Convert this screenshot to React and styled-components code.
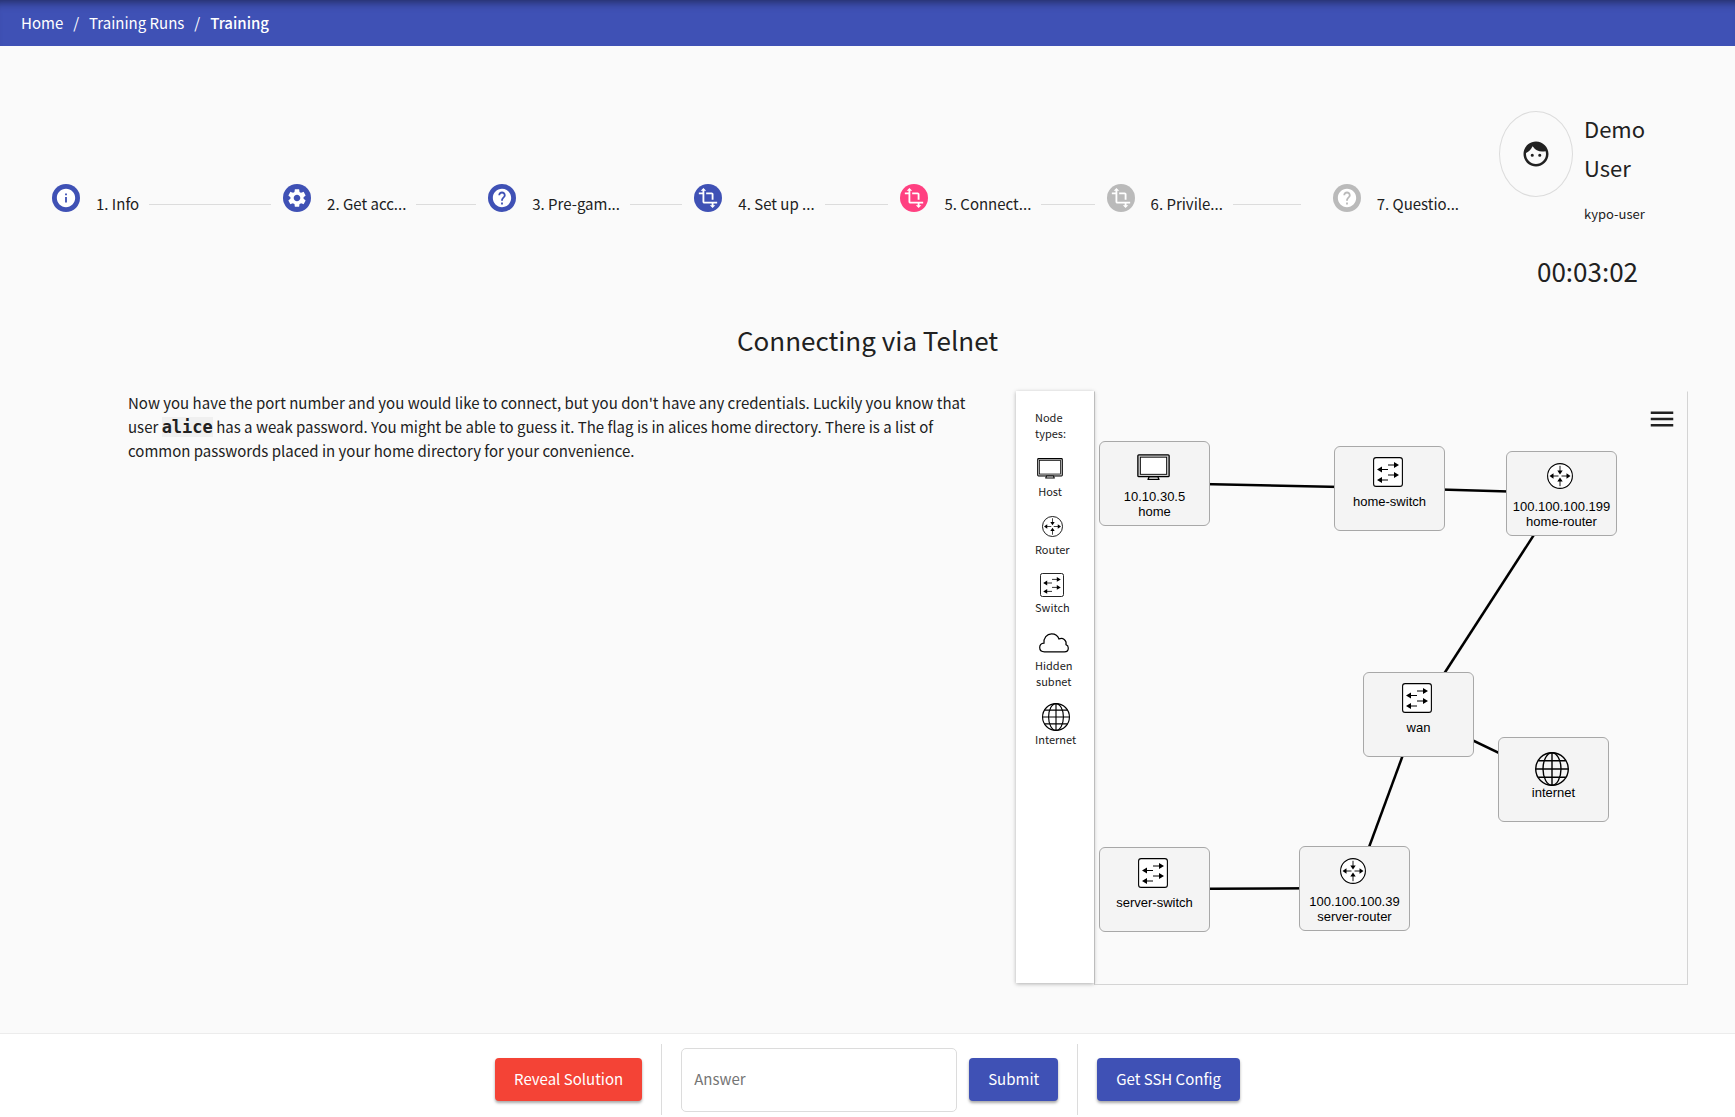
import React from "react";
import styled, { createGlobalStyle } from "styled-components";
import { MdFace, MdHelp, MdInfo, MdMenu, MdSettings, MdTransform } from "react-icons/md";

const GlobalStyle = createGlobalStyle`
  *, *::before, *::after { box-sizing: border-box; }
  body {
    margin: 0;
    background: #fafafa;
    color: #212121;
    font-family: "Noto Sans CJK JP", "Noto Sans", sans-serif;
    font-size: 15px;
    line-height: 24px;
  }
`;

const Page = styled.div`
  min-height: 100vh;
  display: flex;
  flex-direction: column;
`;

const Breadcrumbs = styled.nav`
  background: #3f51b5;
  box-shadow: inset 0 10px 10px -8px rgba(0, 0, 0, 0.5);
  padding: 11px 21px;
  color: #fff;

  ol {
    display: flex;
    margin: 0;
    padding: 0;
    list-style: none;
  }

  li + li::before {
    content: "/";
    margin: 0 10px;
  }
`;

const Crumb = styled.a`
  color: inherit;
  text-decoration: none;
  font-weight: ${(p) => (p.$current ? 500 : 400)};
`;

const Main = styled.main`
  flex: 1;
  display: flex;
  flex-direction: column;
`;

const TopBar = styled.section`
  display: grid;
  grid-template-columns: 1fr 148px;
  column-gap: 40px;
  padding: 65px 88px 0 52px;
`;

const Stepper = styled.ol`
  display: grid;
  grid-template-columns: 231fr 205fr repeat(3, 206fr) 226fr auto;
  align-items: center;
  align-self: start;
  margin: 73px 0 0;
  padding: 0;
  list-style: none;
`;

const Step = styled.li`
  display: flex;
  align-items: center;
  white-space: nowrap;
`;

const stepColors = { done: "#3f51b5", active: "#ff4081", locked: "#bababa" };

const StepIcon = styled.span`
  flex: none;
  display: grid;
  place-items: center;
  width: 28px;
  height: 28px;
  margin: 0 16px 12px 0;
  border-radius: 50%;
  background: ${(p) => stepColors[p.$state]};
  color: #fff;
`;

const StepLine = styled.span`
  flex: 1;
  height: 1px;
  margin: 0 ${(p) => (p.$wide ? 32 : 12)}px 0 10px;
  background: #dcdcdc;
`;

const UserPanel = styled.aside`
  display: grid;
  grid-template-columns: 74px 64px;
  column-gap: 11px;
`;

const Avatar = styled.div`
  display: grid;
  place-items: center;
  height: 86px;
  border: 1px solid #dcdcdc;
  border-radius: 50%;
`;

const UserName = styled.p`
  margin: -2px 0 0;
  font-size: 22px;
  line-height: 39px;
`;

const Login = styled.p`
  margin: 15px 0 0;
  font-size: 13px;
  white-space: nowrap;
`;

const Timer = styled.time`
  grid-column: 1 / -1;
  justify-self: end;
  margin-top: 29px;
  padding-right: 10px;
  font-size: 26px;
  line-height: 32px;
`;

const Title = styled.h1`
  margin: 37px 0 0;
  text-align: center;
  font-size: 26px;
  font-weight: 400;
  line-height: 32px;
`;

const Content = styled.section`
  display: grid;
  grid-template-columns: 842fr 672fr;
  column-gap: 46px;
  padding: 0 47px 48px 128px;
  margin-top: 35px;
`;

const Assignment = styled.p`
  margin: 0;

  code {
    background: #f0f0f0;
    font: bold 17px/16px "DejaVu Sans Mono", monospace;
  }
`;

const Topology = styled.div`
  display: flex;
  min-height: 594px;
`;

const Legend = styled.div`
  flex: none;
  display: flex;
  flex-direction: column;
  align-items: flex-start;
  gap: 13px;
  width: 78px;
  margin-bottom: 2px;
  padding: 18px 19px;
  background: #fff;
  box-shadow: 0 1px 4px rgba(0, 0, 0, 0.3);
  font-size: 11px;
  line-height: 16px;
`;

const LegendItem = styled.div`
  min-width: 30px;
  text-align: center;
`;

const LegendIcon = styled.div`
  display: grid;
  place-items: center;
  height: 29px;
`;

const Canvas = styled.div`
  position: relative;
  flex: 1;
  border: 1px solid #d4d4d4;
  border-left-color: #bdbdbd;
  border-top-color: transparent;
  font-family: "Liberation Sans", Arial, sans-serif;
  font-size: 13px;
  line-height: 15px;
  color: #000;
`;

const Links = styled.svg`
  position: absolute;
  inset: 0;
  width: 100%;
  height: 100%;
  stroke: #000;
  stroke-width: 2.5;
`;

const Node = styled.div`
  position: absolute;
  left: ${(p) => p.$x}px;
  top: ${(p) => p.$y}px;
  width: 111px;
  height: 85px;
  border: 1px solid #a8a8a8;
  border-radius: 6px;
  background: #f4f4f4;
  text-align: center;
  white-space: pre-line;
`;

const NodeIcon = styled.div`
  display: flex;
  justify-content: center;
  height: 47px;
  padding: ${(p) => p.$top}px 3px 0 0;
`;

const MenuButton = styled.button`
  position: absolute;
  top: 12px;
  right: 10px;
  display: grid;
  padding: 0;
  border: 0;
  background: none;
  color: #212121;
  cursor: pointer;
`;

const ActionBar = styled.footer`
  display: flex;
  justify-content: center;
  align-items: center;
  gap: 19px;
  padding: 10px 16px 2px;
  border-top: 1px solid #ececec;
  background: #fff;
`;

const Divider = styled.span`
  align-self: stretch;
  width: 1px;
  min-height: 71px;
  background: #dcdcdc;
`;

const AnswerForm = styled.form`
  display: flex;
  align-items: center;
  gap: 12px;
`;

const AnswerInput = styled.input`
  width: 276px;
  height: 64px;
  padding: 0 12px 2px;
  border: 1px solid #dcdcdc;
  border-radius: 5px;
  background: #fff;
  color: inherit;
  font: inherit;

  &::placeholder {
    color: #757575;
    opacity: 1;
  }
`;

const Button = styled.button`
  height: 43px;
  padding: 0 19px 2px;
  border: 0;
  border-radius: 4px;
  background: ${(p) => (p.$warn ? "#f44336" : "#3f51b5")};
  box-shadow: 0 2px 3px rgba(0, 0, 0, 0.35);
  color: #fff;
  font: inherit;
  cursor: pointer;
`;

function HostIcon({ size }) {
  return (
    <svg width={size} height={size * 0.8} viewBox="0 0 33 26.5" fill="#fff" stroke="#000">
      <rect x="0.8" y="0.8" width="31.4" height="22" rx="1" strokeWidth="1.3" fill="#ccc" />
      <rect x="3.3" y="3.2" width="26.4" height="17.2" strokeWidth="0.9" />
      <path d="M12 23h9l1 2.6h-11z" strokeWidth="1.3" strokeLinejoin="round" />
    </svg>
  );
}

function RouterIcon({ size }) {
  return (
    <svg width={size} height={size} viewBox="0 0 26 26">
      <circle cx="13" cy="13" r="12.4" fill="#fff" stroke="#000" strokeWidth="1.1" />
      <path d="M11.500 13H5M14.500 13H21M13 2.800V8M13 23.200V18" stroke="#000" strokeWidth="0.9" fill="none" />
      <path d="M2.500 13l4-2.700v5.400zM23.500 13l-4-2.700v5.400zM13 11.500l-2.700-4h5.400zM13 14.500l-2.700 4h5.400z" />
    </svg>
  );
}

function SwitchIcon({ size }) {
  return (
    <svg width={size} height={size} viewBox="0 0 30 30">
      <rect x="0.6" y="0.6" width="28.800" height="28.800" rx="2.5" fill="#fff" stroke="#000" strokeWidth="1.1" />
      <path d="M15 8h7M15 18h7M15 12.500H8M15 23H8" stroke="#000" strokeWidth="1" fill="none" />
      <path d="M26 8l-5-3v6zM26 18l-5-3v6zM4 12.500l5-3v6zM4 23l5-3v6z" />
    </svg>
  );
}

function CloudIcon() {
  return (
    <svg width="30" height="20" viewBox="0 0 30 20" fill="none" stroke="#000" strokeWidth="1.2">
      <path d="M5.500 18.800C2.500 18.800.700 16.900.700 14.500.700 12 2.500 10.400 5 10.200 4.400 5 7.800.800 12.500.800c4 0 6.600 2.300 7.500 5.200 3.600-1.800 8 1 7 5.600 1.500.6 2.300 1.800 2.300 3.300 0 2.200-1.500 3.900-3.900 3.900z" />
    </svg>
  );
}

function GlobeIcon({ size }) {
  return (
    <svg width={size} height={size} viewBox="0 0 34 34" fill="none" stroke="#000" strokeWidth="1.4">
      <circle cx="17" cy="17" r="16.300" />
      <ellipse cx="17" cy="17" rx="9" ry="16.300" />
      <path d="M17 .7V33.300M.7 17H33.300M3.200 8.700H30.800M3.200 25.300H30.800" />
    </svg>
  );
}

const legend = [
  { label: "Host", icon: <HostIcon size={26} /> },
  { label: "Router", icon: <RouterIcon size={21} /> },
  { label: "Switch", icon: <SwitchIcon size={24} /> },
  { label: <>Hidden<br />subnet</>, icon: <CloudIcon /> },
  { label: "Internet", icon: <GlobeIcon size={28} /> },
];

const nodeIcons = {
  host: { top: 12, icon: <HostIcon size={33} /> },
  switch: { top: 10, icon: <SwitchIcon size={30} /> },
  router: { top: 11, icon: <RouterIcon size={26} /> },
  internet: { top: 14, icon: <GlobeIcon size={34} /> },
};

const nodes = {
  home: { x: 4, y: 49, type: "host", text: "10.10.30.5\nhome" },
  homeSwitch: { x: 239, y: 54, type: "switch", text: "home-switch" },
  homeRouter: { x: 411, y: 59, type: "router", text: "100.100.100.199\nhome-router" },
  wan: { x: 268, y: 280, type: "switch", text: "wan" },
  internet: { x: 403, y: 345, type: "internet", text: "internet" },
  serverRouter: { x: 204, y: 454, type: "router", text: "100.100.100.39\nserver-router" },
  serverSwitch: { x: 4, y: 455, type: "switch", text: "server-switch" },
};

const links = [
  ["home", "homeSwitch"],
  ["homeSwitch", "homeRouter"],
  ["homeRouter", "wan"],
  ["wan", "internet"],
  ["wan", "serverRouter"],
  ["serverSwitch", "serverRouter"],
];

const steps = [
  { label: "1. Info", icon: MdInfo, state: "done" },
  { label: "2. Get acc...", icon: MdSettings, state: "done" },
  { label: "3. Pre-gam...", icon: MdHelp, state: "done" },
  { label: "4. Set up ...", icon: MdTransform, state: "done" },
  { label: "5. Connect...", icon: MdTransform, state: "active" },
  { label: "6. Privile...", icon: MdTransform, state: "locked" },
  { label: "7. Questio...", icon: MdHelp, state: "locked" },
];

export default function App() {
  return (
    <Page>
      <GlobalStyle />
      <Breadcrumbs aria-label="Breadcrumb">
        <ol>
          <li><Crumb href="#home">Home</Crumb></li>
          <li><Crumb href="#runs">Training Runs</Crumb></li>
          <li><Crumb href="#training" $current aria-current="page">Training</Crumb></li>
        </ol>
      </Breadcrumbs>

      <Main>
        <TopBar>
          <Stepper>
            {steps.map(({ label, icon: Icon, state }, i) => (
              <Step key={label} aria-current={state === "active" ? "step" : undefined}>
                <StepIcon $state={state}><Icon size={22} /></StepIcon>
                <span>{label}</span>
                {i < steps.length - 1 && <StepLine $wide={i === steps.length - 2} />}
              </Step>
            ))}
          </Stepper>
          <UserPanel>
            <Avatar><MdFace size={30} /></Avatar>
            <div>
              <UserName>Demo User</UserName>
              <Login>kypo-user</Login>
            </div>
            <Timer>00:03:02</Timer>
          </UserPanel>
        </TopBar>

        <Title>Connecting via Telnet</Title>

        <Content>
          <Assignment>
            Now you have the port number and you would like to connect, but you don't have any credentials.
            Luckily you know that user <code>alice</code> has a weak password. You might be able to guess it.
            The flag is in alices home directory. There is a list of common passwords placed in your home
            directory for your convenience.
          </Assignment>
          <Topology>
            <Legend>
              <div>Node<br />types:</div>
              {legend.map((item, i) => (
                <LegendItem key={i}>
                  <LegendIcon>{item.icon}</LegendIcon>
                  {item.label}
                </LegendItem>
              ))}
            </Legend>
            <Canvas>
              <Links aria-hidden="true">
                {links.map(([a, b]) => (
                  <line
                    key={a + b}
                    x1={nodes[a].x + 55}
                    y1={nodes[a].y + 42}
                    x2={nodes[b].x + 55}
                    y2={nodes[b].y + 42}
                  />
                ))}
              </Links>
              {Object.entries(nodes).map(([id, n]) => (
                <Node key={id} $x={n.x} $y={n.y}>
                  <NodeIcon $top={nodeIcons[n.type].top}>{nodeIcons[n.type].icon}</NodeIcon>
                  {n.text}
                </Node>
              ))}
              <MenuButton type="button" aria-label="Topology menu"><MdMenu size={30} /></MenuButton>
            </Canvas>
          </Topology>
        </Content>
      </Main>

      <ActionBar>
        <Button type="button" $warn>Reveal Solution</Button>
        <Divider />
        <AnswerForm onSubmit={(e) => e.preventDefault()}>
          <AnswerInput type="text" placeholder="Answer" aria-label="Answer" />
          <Button type="submit">Submit</Button>
        </AnswerForm>
        <Divider />
        <Button type="button">Get SSH Config</Button>
      </ActionBar>
    </Page>
  );
}
